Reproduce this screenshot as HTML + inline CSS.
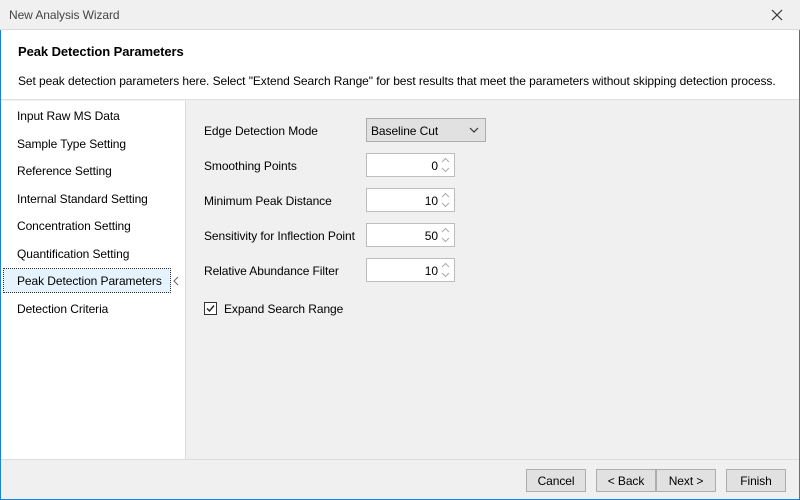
<!DOCTYPE html>
<html><head><style>
*{margin:0;padding:0;box-sizing:border-box}
body{width:800px;height:500px;overflow:hidden;font-family:"Liberation Sans",sans-serif;font-size:12px;color:#000;background:#f0f0f0;position:relative;letter-spacing:-0.08px}
.bl{position:absolute;background:#1883d7}
.title{position:absolute;left:0;top:0;width:800px;height:30px;background:#f0f0f0;border-bottom:1px solid #dadada}
.title span{position:absolute;left:9px;top:8px;color:#444}
.hdr{position:absolute;left:1px;top:30px;width:798px;height:70px;background:#fff;border-bottom:1px solid #e0e0e0}
.hdr b{position:absolute;left:17px;top:14px;font-size:13px}
.hdr p{position:absolute;left:17px;top:44px}
.nav{position:absolute;left:1px;top:101px;width:185px;height:358px;background:#fff;border-right:1px solid #dcdcdc}
.nav div{position:absolute;left:16px}
.nav .sel{position:absolute;left:2px;top:167px;width:168px;height:25px;background:#e5f3ff;border:1px dotted #333}
.lbl{position:absolute;left:204px}
.box{position:absolute;left:366px;width:89px;height:24px;background:#fff;border:1px solid #bdbdbd;text-align:right;padding:5px 16px 0 0}
.box svg{position:absolute;right:4px;top:3px}
.combo{position:absolute;left:366px;top:118px;width:120px;height:24px;background:#e1e1e1;border:1px solid #adadad;padding:5px 0 0 4px}
.foot{position:absolute;left:1px;top:459px;width:798px;height:40px;border-top:1px solid #dcdcdc;background:#f0f0f0}
.btn{position:absolute;top:469px;width:60px;height:23px;background:#e1e1e1;border:1px solid #adadad;text-align:center;padding-top:4px}
</style></head><body>
<div class="title"><span>New Analysis Wizard</span>
<svg style="position:absolute;left:771px;top:9px" width="12" height="12"><path d="M1 1L11 11M11 1L1 11" stroke="#333" stroke-width="1.2"/></svg></div>
<div class="hdr"><b>Peak Detection Parameters</b><p>Set peak detection parameters here. Select "Extend Search Range" for best results that meet the parameters without skipping detection process.</p></div>
<div class="nav">
<div class="sel"></div>
<div style="top:8px">Input Raw MS Data</div>
<div style="top:36px">Sample Type Setting</div>
<div style="top:63px">Reference Setting</div>
<div style="top:91px">Internal Standard Setting</div>
<div style="top:118px">Concentration Setting</div>
<div style="top:146px">Quantification Setting</div>
<div style="top:173px">Peak Detection Parameters</div>
<div style="top:201px">Detection Criteria</div>
<svg style="position:absolute;left:172px;top:175px" width="6" height="10"><path d="M5 1L1 5L5 9" stroke="#666" fill="none"/></svg>
</div>
<div class="lbl" style="top:124px">Edge Detection Mode</div>
<div class="combo">Baseline Cut<svg style="position:absolute;right:6px;top:8px" width="10" height="6"><path d="M1 1L5 5L9 1" stroke="#333" fill="none" stroke-width="1.2"/></svg></div>
<div class="lbl" style="top:159px">Smoothing Points</div>
<div class="box" style="top:153px">0<svg width="9" height="16"><path d="M1 5L4.5 1.5L8 5M1 11L4.5 14.5L8 11" stroke="#aaa" fill="none"/></svg></div>
<div class="lbl" style="top:194px">Minimum Peak Distance</div>
<div class="box" style="top:188px">10<svg width="9" height="16"><path d="M1 5L4.5 1.5L8 5M1 11L4.5 14.5L8 11" stroke="#aaa" fill="none"/></svg></div>
<div class="lbl" style="top:229px">Sensitivity for Inflection Point</div>
<div class="box" style="top:223px">50<svg width="9" height="16"><path d="M1 5L4.5 1.5L8 5M1 11L4.5 14.5L8 11" stroke="#aaa" fill="none"/></svg></div>
<div class="lbl" style="top:264px">Relative Abundance Filter</div>
<div class="box" style="top:258px">10<svg width="9" height="16"><path d="M1 5L4.5 1.5L8 5M1 11L4.5 14.5L8 11" stroke="#aaa" fill="none"/></svg></div>
<div style="position:absolute;left:204px;top:302px;width:13px;height:13px;background:#fff;border:1px solid #333"><svg width="11" height="11" style="position:absolute;left:0;top:0"><path d="M2 5.5L4.5 8L9 2.5" stroke="#222" fill="none" stroke-width="1.4"/></svg></div>
<div class="lbl" style="left:224px;top:302px">Expand Search Range</div>
<div class="foot"></div>
<div class="btn" style="left:526px">Cancel</div>
<div class="btn" style="left:596px">&lt; Back</div>
<div class="btn" style="left:656px">Next &gt;</div>
<div class="btn" style="left:726px">Finish</div>
<div class="bl" style="left:0;top:30px;width:1px;height:470px"></div>
<div class="bl" style="right:0;top:30px;width:1px;height:470px"></div>
<div class="bl" style="left:0;bottom:0;width:800px;height:1px"></div>
</body></html>
